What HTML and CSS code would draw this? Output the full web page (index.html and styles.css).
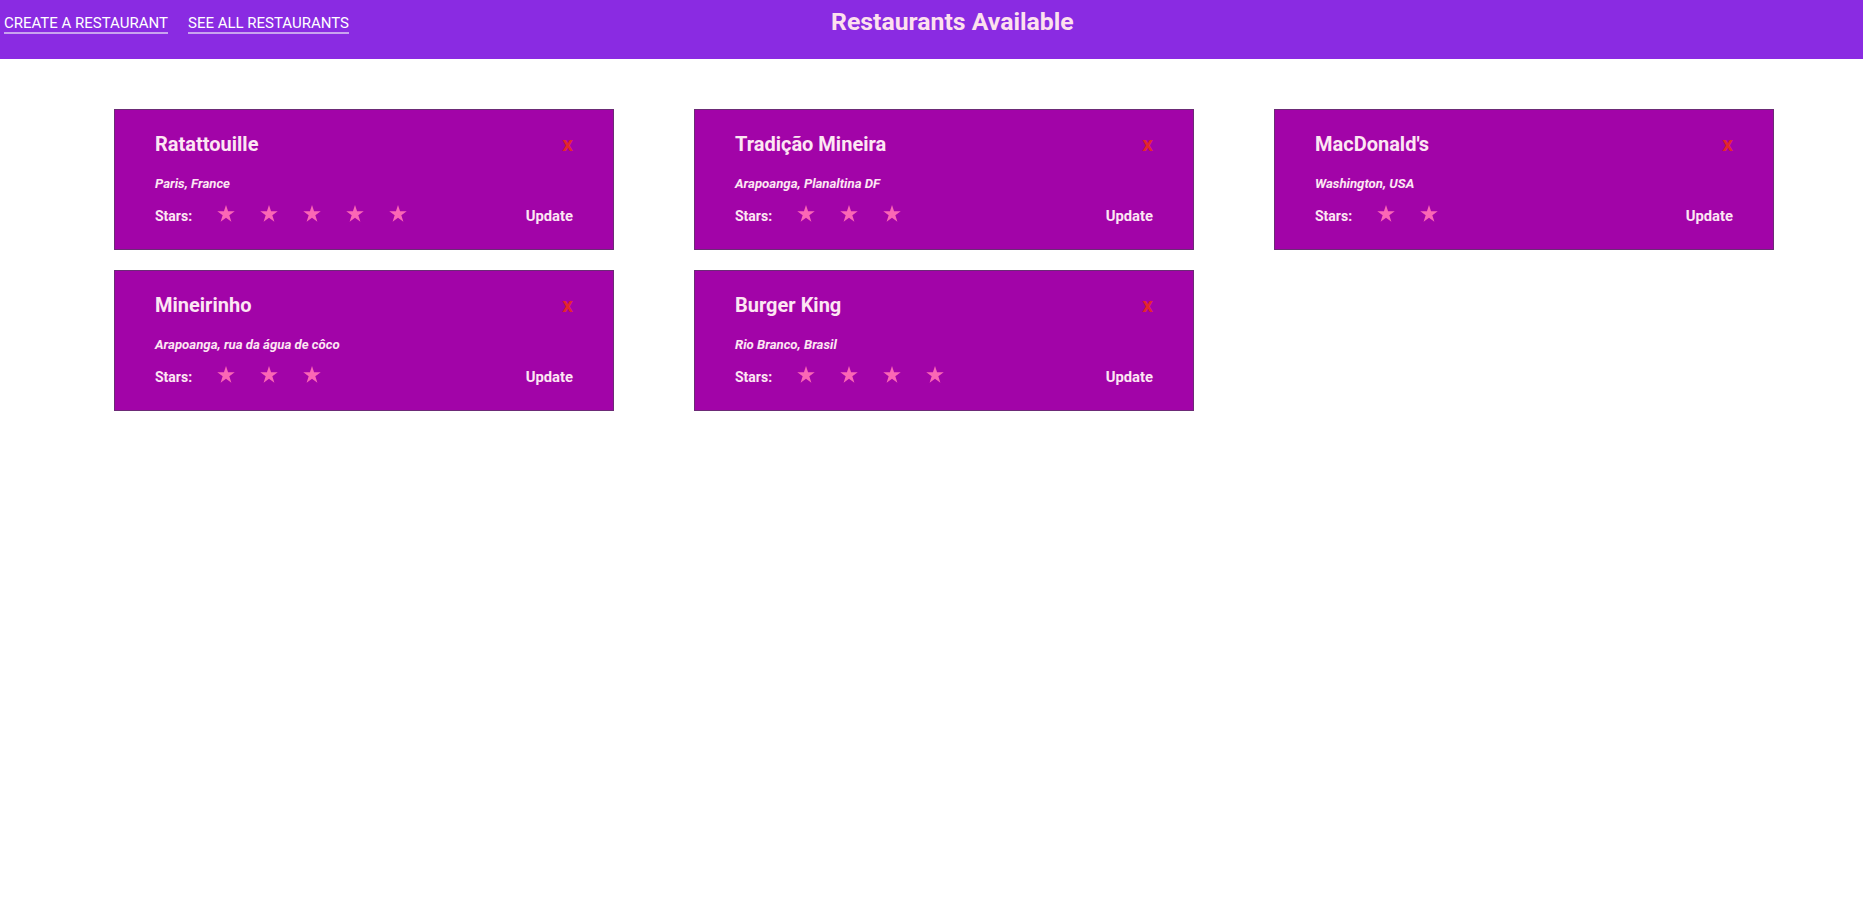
FILE: index.html
```html
<!DOCTYPE html>
<html lang="en">
<head>
<meta charset="utf-8">
<title>Restaurants Available</title>
<link rel="stylesheet" href="styles.css">
</head>
<body>
<header class="topbar">
  <nav class="nav">
    <a class="nav-link" href="#">CREATE A RESTAURANT</a>
    <a class="nav-link" href="#">SEE ALL RESTAURANTS</a>
  </nav>
  <h1 class="page-title">Restaurants Available</h1>
</header>
<main class="grid">
  <div class="card">
    <div class="card-head"><span class="name">Ratattouille</span><span class="remove">x</span></div>
    <div class="place">Paris, France</div>
    <div class="rating">
      <span class="label">Stars:</span>
      <span class="stars">
        <svg class="star" viewBox="0 0 24 23"><polygon points="12,0 14.8,8.6 23.8,8.6 16.5,13.9 19.3,22.5 12,17.2 4.7,22.5 7.5,13.9 0.2,8.6 9.2,8.6"/></svg>
        <svg class="star" viewBox="0 0 24 23"><polygon points="12,0 14.8,8.6 23.8,8.6 16.5,13.9 19.3,22.5 12,17.2 4.7,22.5 7.5,13.9 0.2,8.6 9.2,8.6"/></svg>
        <svg class="star" viewBox="0 0 24 23"><polygon points="12,0 14.8,8.6 23.8,8.6 16.5,13.9 19.3,22.5 12,17.2 4.7,22.5 7.5,13.9 0.2,8.6 9.2,8.6"/></svg>
        <svg class="star" viewBox="0 0 24 23"><polygon points="12,0 14.8,8.6 23.8,8.6 16.5,13.9 19.3,22.5 12,17.2 4.7,22.5 7.5,13.9 0.2,8.6 9.2,8.6"/></svg>
        <svg class="star" viewBox="0 0 24 23"><polygon points="12,0 14.8,8.6 23.8,8.6 16.5,13.9 19.3,22.5 12,17.2 4.7,22.5 7.5,13.9 0.2,8.6 9.2,8.6"/></svg>
      </span>
      <span class="update">Update</span>
    </div>
  </div>
  <div class="card">
    <div class="card-head"><span class="name">Tradição Mineira</span><span class="remove">x</span></div>
    <div class="place">Arapoanga, Planaltina DF</div>
    <div class="rating">
      <span class="label">Stars:</span>
      <span class="stars">
        <svg class="star" viewBox="0 0 24 23"><polygon points="12,0 14.8,8.6 23.8,8.6 16.5,13.9 19.3,22.5 12,17.2 4.7,22.5 7.5,13.9 0.2,8.6 9.2,8.6"/></svg>
        <svg class="star" viewBox="0 0 24 23"><polygon points="12,0 14.8,8.6 23.8,8.6 16.5,13.9 19.3,22.5 12,17.2 4.7,22.5 7.5,13.9 0.2,8.6 9.2,8.6"/></svg>
        <svg class="star" viewBox="0 0 24 23"><polygon points="12,0 14.8,8.6 23.8,8.6 16.5,13.9 19.3,22.5 12,17.2 4.7,22.5 7.5,13.9 0.2,8.6 9.2,8.6"/></svg>
      </span>
      <span class="update">Update</span>
    </div>
  </div>
  <div class="card">
    <div class="card-head"><span class="name">MacDonald's</span><span class="remove">x</span></div>
    <div class="place">Washington, USA</div>
    <div class="rating">
      <span class="label">Stars:</span>
      <span class="stars">
        <svg class="star" viewBox="0 0 24 23"><polygon points="12,0 14.8,8.6 23.8,8.6 16.5,13.9 19.3,22.5 12,17.2 4.7,22.5 7.5,13.9 0.2,8.6 9.2,8.6"/></svg>
        <svg class="star" viewBox="0 0 24 23"><polygon points="12,0 14.8,8.6 23.8,8.6 16.5,13.9 19.3,22.5 12,17.2 4.7,22.5 7.5,13.9 0.2,8.6 9.2,8.6"/></svg>
      </span>
      <span class="update">Update</span>
    </div>
  </div>
  <div class="card">
    <div class="card-head"><span class="name">Mineirinho</span><span class="remove">x</span></div>
    <div class="place">Arapoanga, rua da água de côco</div>
    <div class="rating">
      <span class="label">Stars:</span>
      <span class="stars">
        <svg class="star" viewBox="0 0 24 23"><polygon points="12,0 14.8,8.6 23.8,8.6 16.5,13.9 19.3,22.5 12,17.2 4.7,22.5 7.5,13.9 0.2,8.6 9.2,8.6"/></svg>
        <svg class="star" viewBox="0 0 24 23"><polygon points="12,0 14.8,8.6 23.8,8.6 16.5,13.9 19.3,22.5 12,17.2 4.7,22.5 7.5,13.9 0.2,8.6 9.2,8.6"/></svg>
        <svg class="star" viewBox="0 0 24 23"><polygon points="12,0 14.8,8.6 23.8,8.6 16.5,13.9 19.3,22.5 12,17.2 4.7,22.5 7.5,13.9 0.2,8.6 9.2,8.6"/></svg>
      </span>
      <span class="update">Update</span>
    </div>
  </div>
  <div class="card">
    <div class="card-head"><span class="name">Burger King</span><span class="remove">x</span></div>
    <div class="place">Rio Branco, Brasil</div>
    <div class="rating">
      <span class="label">Stars:</span>
      <span class="stars">
        <svg class="star" viewBox="0 0 24 23"><polygon points="12,0 14.8,8.6 23.8,8.6 16.5,13.9 19.3,22.5 12,17.2 4.7,22.5 7.5,13.9 0.2,8.6 9.2,8.6"/></svg>
        <svg class="star" viewBox="0 0 24 23"><polygon points="12,0 14.8,8.6 23.8,8.6 16.5,13.9 19.3,22.5 12,17.2 4.7,22.5 7.5,13.9 0.2,8.6 9.2,8.6"/></svg>
        <svg class="star" viewBox="0 0 24 23"><polygon points="12,0 14.8,8.6 23.8,8.6 16.5,13.9 19.3,22.5 12,17.2 4.7,22.5 7.5,13.9 0.2,8.6 9.2,8.6"/></svg>
        <svg class="star" viewBox="0 0 24 23"><polygon points="12,0 14.8,8.6 23.8,8.6 16.5,13.9 19.3,22.5 12,17.2 4.7,22.5 7.5,13.9 0.2,8.6 9.2,8.6"/></svg>
      </span>
      <span class="update">Update</span>
    </div>
  </div>
</main>
</body>
</html>
```

FILE: styles.css
```css
* { box-sizing: border-box; }

body {
  margin: 0;
  font-family: Roboto, "Liberation Sans", Arial, sans-serif;
  background: #ffffff;
}

.topbar {
  display: flex;
  align-items: flex-start;
  height: 59px;
  background: #8a2be2;
}

.nav {
  display: flex;
  gap: 20px;
  padding: 14px 0 0 4px;
}

.nav-link {
  color: #ffffff;
  text-decoration: none;
  font-size: 15px;
  line-height: 18px;
  padding-bottom: 0;
  border-bottom: 2px solid #c9a3ef;
}

.page-title {
  margin: 0 0 0 482px;
  padding-top: 7px;
  font-size: 24.8px;
  line-height: 30px;
  font-weight: 700;
  color: #fde0ee;
}

.grid {
  display: grid;
  grid-template-columns: repeat(3, 500px);
  column-gap: 80px;
  row-gap: 20px;
  padding: 50px 0 0 114px;
}

.card {
  height: 141px;
  background: #a204a8;
  border: 1px solid #6c2b76;
  padding: 22px 40px 0 40px;
  color: #fde6f3;
}

.card-head {
  display: flex;
  justify-content: space-between;
  align-items: center;
  height: 24px;
}

.name {
  font-size: 20px;
  font-weight: 700;
  line-height: 24px;
}

.remove {
  font-size: 21px;
  font-weight: 700;
  color: #e3262c;
  line-height: 24px;
  margin-top: 0;
}

.place {
  margin-top: 20px;
  font-size: 13.2px;
  line-height: 16px;
  font-weight: 700;
  font-style: italic;
}

.rating {
  display: flex;
  align-items: center;
  margin-top: 13px;
  height: 22px;
}

.label {
  font-size: 14px;
  font-weight: 700;
  width: 62px;
}

.stars {
  display: flex;
  gap: 25px;
  margin-top: -5px;
}

.star {
  width: 18px;
  height: 17px;
  fill: #fb67b5;
}

.update {
  margin-left: auto;
  font-size: 14.8px;
  font-weight: 700;
}
```
